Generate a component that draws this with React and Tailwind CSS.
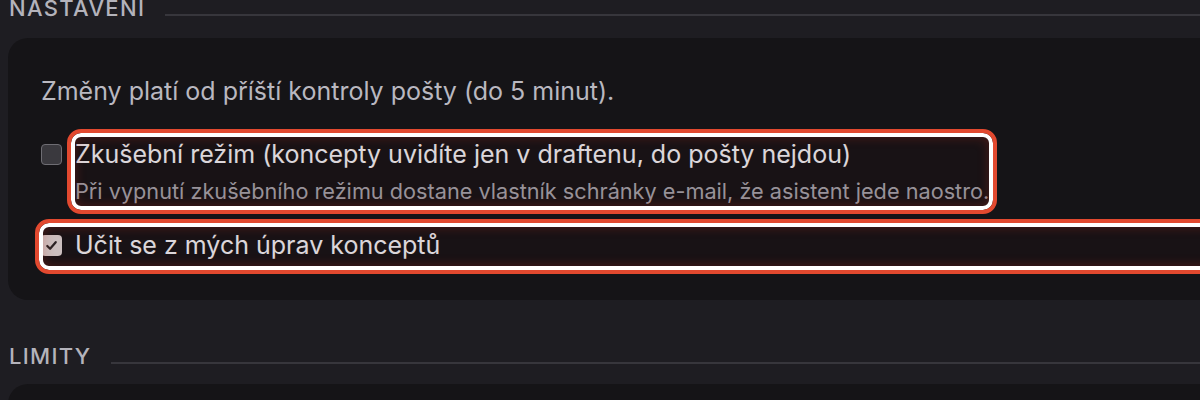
export default function App() {
  return (
    <main className="w-[1200px] h-[400px] overflow-hidden bg-[#1e1d22] font-['Inter',sans-serif]">

      {/* NASTAVENÍ */}
      <section className="pl-[8px] -mt-[6px]">
        <div className="flex items-end gap-[20px]">
          <h2 className="pl-[1px] text-[22px] leading-[28px] font-medium uppercase tracking-[0.06em] text-[#b4b3bb]">
            Nastavení
          </h2>
          <div className="flex-1 h-[2px] mb-[6px] bg-[#37363c]" />
        </div>

        <div className="mt-[16px] -mr-[40px] rounded-[20px] bg-[#151417] pl-[33px] pt-[37px] pb-[39px]">
          <p className="text-[25px] leading-[32px] text-[#b9b8c0]">
            Změny platí od příští kontroly pošty (do 5 minut).
          </p>

          {/* ZKUŠEBNÍ REŽIM */}
          <div className="mt-[31px] flex items-start gap-[13px]">
            <span className="mt-[6px] w-[21px] h-[21px] shrink-0 rounded-[4px] border-[1.5px] border-[#6e6d73] bg-[#3a393e]" />
            <div className="relative">
              <div className="text-[25px] leading-[32px] text-[#eeeef2]">
                Zkušební režim (koncepty uvidíte jen v draftenu, do pošty nejdou)
              </div>
              <div className="mt-[7px] text-[21.7px] leading-[28px] text-[#a3a2aa]">
                Při vypnutí zkušebního režimu dostane vlastník schránky e-mail, že asistent jede naostro.
              </div>
              <div className="absolute -top-[5px] -bottom-[5px] -left-[4px] -right-[4px] rounded-[10px] border-4 border-white outline-4 outline-[#e2492f] bg-[#3a0808]/10 shadow-[inset_0_0_12px_rgba(200,50,30,0.3)]" />
            </div>
          </div>

          {/* UČIT SE */}
          <div className="relative mt-[24px] flex items-start gap-[13px]">
            <span className="mt-[6px] w-[21px] h-[21px] shrink-0 rounded-[4px] bg-[#dcd4d4] flex items-center justify-center">
              <svg viewBox="0 0 16 16" className="w-[15px] h-[15px]" fill="none" stroke="#2a2628" strokeWidth="2.4" strokeLinecap="round" strokeLinejoin="round">
                <path d="M3.5 8.5l3 3 6-7" />
              </svg>
            </span>
            <span className="text-[25px] leading-[32px] text-[#eeeef2]">
              Učit se z mých úprav konceptů
            </span>
            <div className="absolute -top-[6px] -bottom-[9px] -left-[2px] -right-[4px] rounded-[10px] border-4 border-white outline-4 outline-[#e2492f] bg-[#3a0808]/10 shadow-[inset_0_0_12px_rgba(200,50,30,0.3)]" />
          </div>
        </div>
      </section>

      {/* LIMITY */}
      <section className="pl-[8px] mt-[42px]">
        <div className="flex items-end gap-[20px]">
          <h2 className="pl-[1px] text-[22px] leading-[28px] font-medium uppercase tracking-[0.06em] text-[#b4b3bb]">
            Limity
          </h2>
          <div className="flex-1 h-[2px] mb-[6px] bg-[#37363c]" />
        </div>
        <div className="mt-[14px] -mr-[40px] h-[120px] rounded-[20px] bg-[#151417]" />
      </section>

    </main>
  );
}
